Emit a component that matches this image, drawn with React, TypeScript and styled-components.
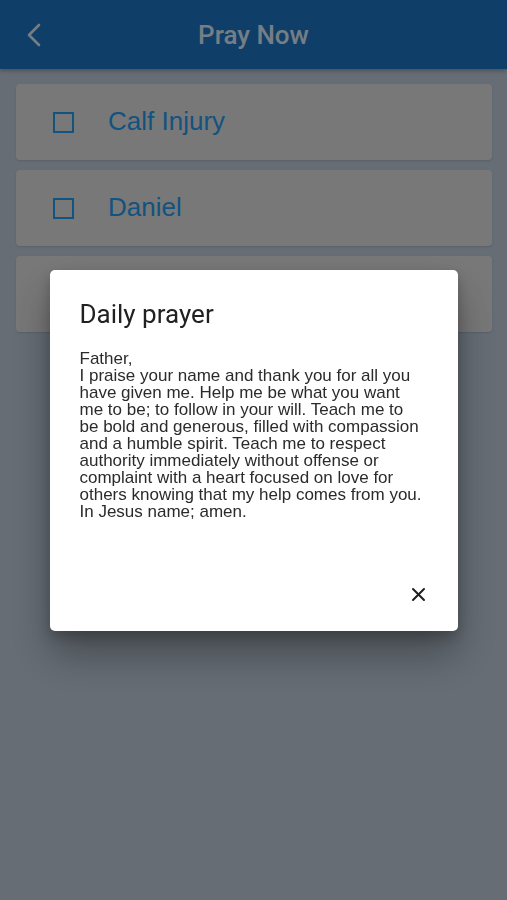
import styled, { createGlobalStyle } from "styled-components";

const GlobalStyle = createGlobalStyle`
  html, body {
    margin: 0;
    padding: 0;
    background: #aab6c3;
    font-family: "Liberation Sans", Arial, sans-serif;
  }
`;

const items = ["Calf Injury", "Daniel", ""];

const prayer = [
  "Father,",
  "I praise your name and thank you for all you",
  "have given me. Help me be what you want",
  "me to be; to follow in your will. Teach me to",
  "be bold and generous, filled with compassion",
  "and a humble spirit. Teach me to respect",
  "authority immediately without offense or",
  "complaint with a heart focused on love for",
  "others knowing that my help comes from you.",
  "In Jesus name; amen.",
];

export default function App() {
  return (
    <>
      <GlobalStyle />
      <StyledPage>
        <StyledHeader>
          <StyledBack aria-label="back">
            <svg width="16" height="24" viewBox="0 0 16 24" fill="none">
              <path
                d="M13 2 L3 12 L13 22"
                stroke="#c4d2de"
                strokeWidth="2.6"
                strokeLinecap="round"
                strokeLinejoin="round"
              />
            </svg>
          </StyledBack>
          <StyledTitle>Pray Now</StyledTitle>
        </StyledHeader>
        <StyledList>
          {items.map((name, i) => (
            <StyledCard key={i}>
              {name && (
                <>
                  <StyledCheckbox />
                  <StyledItemText>{name}</StyledItemText>
                </>
              )}
            </StyledCard>
          ))}
        </StyledList>
      </StyledPage>
      <StyledOverlay>
        <StyledDialog>
          <StyledDialogTitle>Daily prayer</StyledDialogTitle>
          <StyledDialogBody>{prayer.join("\n")}</StyledDialogBody>
          <StyledDialogFooter>
            <StyledClose aria-label="close">
              <svg width="15" height="15" viewBox="0 0 15 15">
                <path
                  d="M2 2 L13 13 M13 2 L2 13"
                  stroke="#1e1e1e"
                  strokeWidth="2"
                  strokeLinecap="round"
                />
              </svg>
            </StyledClose>
          </StyledDialogFooter>
        </StyledDialog>
      </StyledOverlay>
    </>
  );
}

const StyledPage = styled.div`
  min-height: 900px;
  background: #aab6c3;
`;

const StyledHeader = styled.div`
  height: 69px;
  background: #1a68ad;
  display: flex;
  align-items: center;
  justify-content: center;
  position: relative;
  box-shadow: 0 2px 4px rgba(0, 0, 0, 0.25);
`;

const StyledBack = styled.div`
  position: absolute;
  left: 26px;
  top: 23px;
  display: flex;
`;

const StyledTitle = styled.div`
  color: #c4d2de;
  font-family: Roboto, sans-serif;
  font-size: 26px;
  font-weight: 500;
`;

const StyledList = styled.div`
  display: flex;
  flex-direction: column;
  gap: 10px;
  padding: 15px 15px 0 16px;
`;

const StyledCard = styled.div`
  height: 76px;
  background: #c8c8c8;
  border-radius: 4px;
  display: flex;
  align-items: center;
  padding-left: 37px;
  box-shadow: 0 1px 2px rgba(0, 0, 0, 0.12);
`;

const StyledCheckbox = styled.div`
  width: 17px;
  height: 17px;
  border: 2px solid #1f8ad4;
  margin-right: 34px;
`;

const StyledItemText = styled.div`
  color: #1f8ad4;
  font-size: 26px;
  margin-top: -2px;
`;

const StyledOverlay = styled.div`
  position: fixed;
  top: 0;
  left: 0;
  width: 100%;
  height: 100%;
  z-index: 100;
  background: rgba(0, 0, 0, 0.4);
  display: flex;
  justify-content: center;
  align-items: flex-start;
  padding-top: 270px;
  box-sizing: border-box;
`;

const StyledDialog = styled.div`
  width: 408px;
  height: 361px;
  box-sizing: border-box;
  background: #ffffff;
  border-radius: 5px;
  padding: 29px 30px 22px 30px;
  display: flex;
  flex-direction: column;
  box-shadow: 0 24px 40px rgba(0, 0, 0, 0.32), 0 6px 14px rgba(0, 0, 0, 0.22);
`;

const StyledDialogTitle = styled.div`
  font-family: Roboto, sans-serif;
  font-size: 26px;
  color: #212121;
  line-height: 30px;
`;

const StyledDialogBody = styled.div`
  margin-top: 21px;
  font-size: 17px;
  line-height: 17px;
  color: #2b2b2b;
  white-space: pre-line;
`;

const StyledDialogFooter = styled.div`
  margin-top: auto;
  display: flex;
  justify-content: flex-end;
`;

const StyledClose = styled.div`
  width: 30px;
  height: 30px;
  display: flex;
  align-items: center;
  justify-content: center;
  margin-right: -6px;
`;
